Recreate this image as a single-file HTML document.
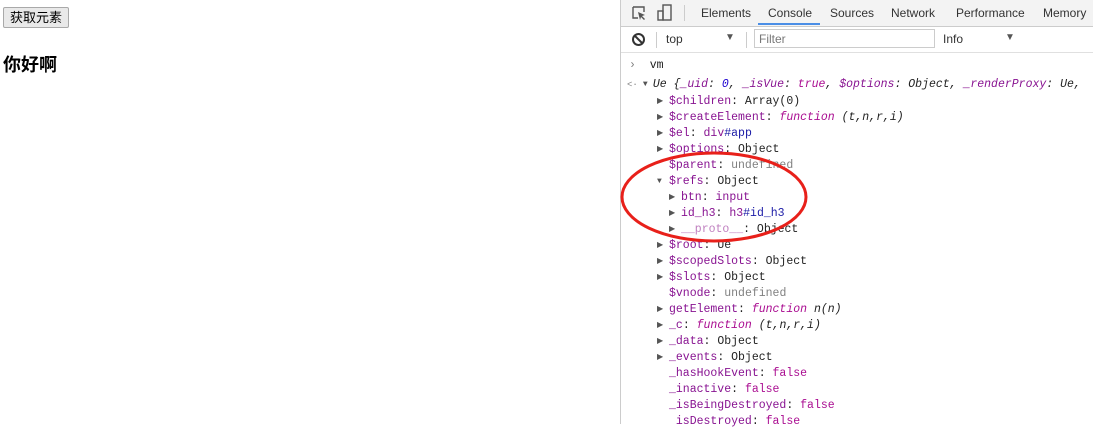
<!DOCTYPE html>
<html><head><meta charset="utf-8"><style>
body{margin:0;width:1093px;height:424px;overflow:hidden;background:#fff;position:relative;font-family:"Liberation Sans","Noto Sans CJK SC",sans-serif}
.btn{position:absolute;left:3px;top:7px;width:66px;height:21px;box-sizing:border-box;border:1px solid #a9a9a9;background:#e9e9e9;font-size:13px;line-height:19px;text-align:center;border-radius:2px}
h3{position:absolute;left:3px;top:51px;margin:0;font-size:18px;font-weight:bold}
.dt{position:absolute;left:620px;top:0;width:473px;height:424px;border-left:1px solid #ccc;background:#fff}
.tb{position:absolute;left:0;top:0;width:473px;height:26px;background:#f3f3f3;border-bottom:1px solid #ccc;font-size:12px;color:#333}
.tb span{position:absolute;top:6px}
.fb{position:absolute;left:0;top:27px;width:473px;height:25px;border-bottom:1px solid #e0e0e0;font-size:12px;color:#333}
.ln{position:absolute;font-family:"Liberation Mono",monospace;font-size:11.5px;line-height:16px;white-space:pre;color:#222}
.k{color:#881391}.d{color:#c080c0}.u{color:#808080}.f{color:#aa0d91;font-style:italic}.b{color:#aa0d91}.n{color:#1c00cf}.bl{color:#1a1aa6}
.t{display:inline-block;width:12px;color:#555;font-size:8px;vertical-align:top}
</style></head><body>
<div class="btn">获取元素</div>
<h3>你好啊</h3>
<div class="dt">
<div class="tb">
<svg style="position:absolute;left:10px;top:5px" width="16" height="16"><path d="M2 2h11v5M2 2v11h5" stroke="#555" fill="none" stroke-width="1.4"/><path d="M7 7l7 3-3 1 3 3-1 1-3-3-1 3z" fill="#555"/></svg>
<svg style="position:absolute;left:36px;top:4px" width="16" height="18"><rect x="6" y="1" width="8" height="15" stroke="#555" fill="none" stroke-width="1.4"/><rect x="1" y="7" width="5" height="9" stroke="#555" fill="none" stroke-width="1.4"/></svg>
<div style="position:absolute;left:63px;top:5px;width:1px;height:16px;background:#ccc"></div>
<span style="left:80px">Elements</span>
<span style="left:147px">Console</span>
<div style="position:absolute;left:137px;top:23px;width:62px;height:2px;background:#4a8ee6"></div>
<span style="left:209px">Sources</span>
<span style="left:270px">Network</span>
<span style="left:335px">Performance</span>
<span style="left:422px">Memory</span>
</div>
<div class="fb">
<svg style="position:absolute;left:10px;top:5px" width="15" height="15"><circle cx="7.5" cy="7.5" r="5.5" stroke="#333" stroke-width="2" fill="none"/><path d="M3.5 3.5l8 8" stroke="#333" stroke-width="2"/></svg>
<div style="position:absolute;left:35px;top:5px;width:1px;height:16px;background:#ccc"></div>
<span style="position:absolute;left:45px;top:5px">top</span>
<span style="position:absolute;left:104px;top:5px;font-size:10px;color:#555">▼</span>
<div style="position:absolute;left:125px;top:5px;width:1px;height:16px;background:#ccc"></div>
<div style="position:absolute;left:133px;top:2px;width:181px;height:19px;border:1px solid #ccc;box-sizing:border-box;color:#777;padding:2px 4px">Filter</div>
<span style="position:absolute;left:322px;top:5px">Info</span>
<span style="position:absolute;left:384px;top:5px;font-size:10px;color:#555">▼</span>
</div>
</div>
<div class="ln" style="left:629px;top:58px"><span class="u">›</span>  vm</div>
<div class="ln" style="left:627px;top:77px"><span class="u" style="font-size:9px">&lt;·</span><span class="t" style="width:10px;margin-left:5px">▼</span><i>Ue {<span class="k">_uid</span>: <span class="n">0</span>, <span class="k">_isVue</span>: <span class="b">true</span>, <span class="k">$options</span>: Object, <span class="k">_renderProxy</span>: Ue,</i></div>
<div class="ln" style="left:657px;top:94px"><span class="t">▶</span><span class="k">$children</span>: Array(0)</div>
<div class="ln" style="left:657px;top:110px"><span class="t">▶</span><span class="k">$createElement</span>: <span class="f">function</span> <i>(t,n,r,i)</i></div>
<div class="ln" style="left:657px;top:126px"><span class="t">▶</span><span class="k">$el</span>: <span class="k">div</span><span class="bl">#app</span></div>
<div class="ln" style="left:657px;top:142px"><span class="t">▶</span><span class="k">$options</span>: Object</div>
<div class="ln" style="left:657px;top:158px"><span class="t"></span><span class="k">$parent</span>: <span class="u">undefined</span></div>
<div class="ln" style="left:657px;top:174px"><span class="t">▼</span><span class="k">$refs</span>: Object</div>
<div class="ln" style="left:669px;top:190px"><span class="t">▶</span><span class="k">btn</span>: <span class="k">input</span></div>
<div class="ln" style="left:669px;top:206px"><span class="t">▶</span><span class="k">id_h3</span>: <span class="k">h3</span><span class="bl">#id_h3</span></div>
<div class="ln" style="left:669px;top:222px"><span class="t">▶</span><span class="d">__proto__</span>: Object</div>
<div class="ln" style="left:657px;top:238px"><span class="t">▶</span><span class="k">$root</span>: Ue</div>
<div class="ln" style="left:657px;top:254px"><span class="t">▶</span><span class="k">$scopedSlots</span>: Object</div>
<div class="ln" style="left:657px;top:270px"><span class="t">▶</span><span class="k">$slots</span>: Object</div>
<div class="ln" style="left:657px;top:286px"><span class="t"></span><span class="k">$vnode</span>: <span class="u">undefined</span></div>
<div class="ln" style="left:657px;top:302px"><span class="t">▶</span><span class="k">getElement</span>: <span class="f">function</span> <i>n(n)</i></div>
<div class="ln" style="left:657px;top:318px"><span class="t">▶</span><span class="k">_c</span>: <span class="f">function</span> <i>(t,n,r,i)</i></div>
<div class="ln" style="left:657px;top:334px"><span class="t">▶</span><span class="k">_data</span>: Object</div>
<div class="ln" style="left:657px;top:350px"><span class="t">▶</span><span class="k">_events</span>: Object</div>
<div class="ln" style="left:657px;top:366px"><span class="t"></span><span class="k">_hasHookEvent</span>: <span class="b">false</span></div>
<div class="ln" style="left:657px;top:382px"><span class="t"></span><span class="k">_inactive</span>: <span class="b">false</span></div>
<div class="ln" style="left:657px;top:398px"><span class="t"></span><span class="k">_isBeingDestroyed</span>: <span class="b">false</span></div>
<div class="ln" style="left:657px;top:414px"><span class="t"></span> <span class="k">isDestroyed</span>: <span class="b">false</span></div>
<svg style="position:absolute;left:0;top:0" width="1093" height="424"><ellipse cx="714" cy="197" rx="92" ry="44" fill="none" stroke="#e8201a" stroke-width="3"/></svg>
</body></html>
